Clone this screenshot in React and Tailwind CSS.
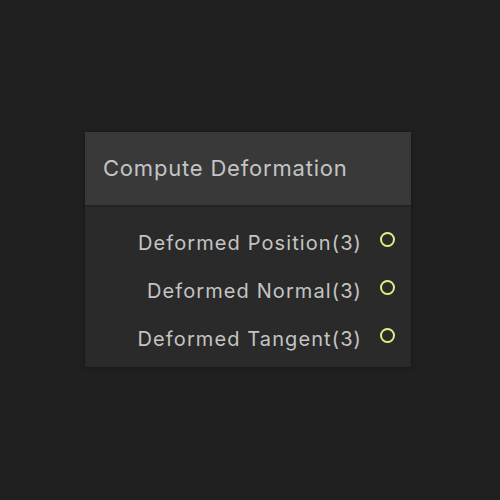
export default function App() {
  const ports = ['Deformed Position(3)', 'Deformed Normal(3)', 'Deformed Tangent(3)'];

  return (
    <div className="w-[500px] h-[500px] bg-[#202020] pt-[132px] pl-[85px]" style={{ fontFamily: 'Inter, "Liberation Sans", sans-serif' }}>
      <div className="w-[326px] h-[235px] flex flex-col bg-[#2a2a2a] shadow-[0_0_4px_rgba(0,0,0,0.4)]">
        <div className="h-[75px] shrink-0 flex items-center pl-[18px] bg-[#393939] border-b-2 border-[#232323]">
          <span className="text-[22px] tracking-[0.8px] text-[#c4c4c4]">Compute Deformation</span>
        </div>
        <div className="flex flex-col pt-[8px]">
          {ports.map((p) => (
            <div key={p} className="h-12 flex items-center justify-end pr-[16px] gap-[18px]">
              <span className="mt-[8px] text-[20px] tracking-[1.1px] text-[#c4c4c4]">{p}</span>
              <span className="w-[15px] h-[15px] rounded-full border-2 border-[#e4ee7e]" />
            </div>
          ))}
        </div>
      </div>
    </div>
  );
}
